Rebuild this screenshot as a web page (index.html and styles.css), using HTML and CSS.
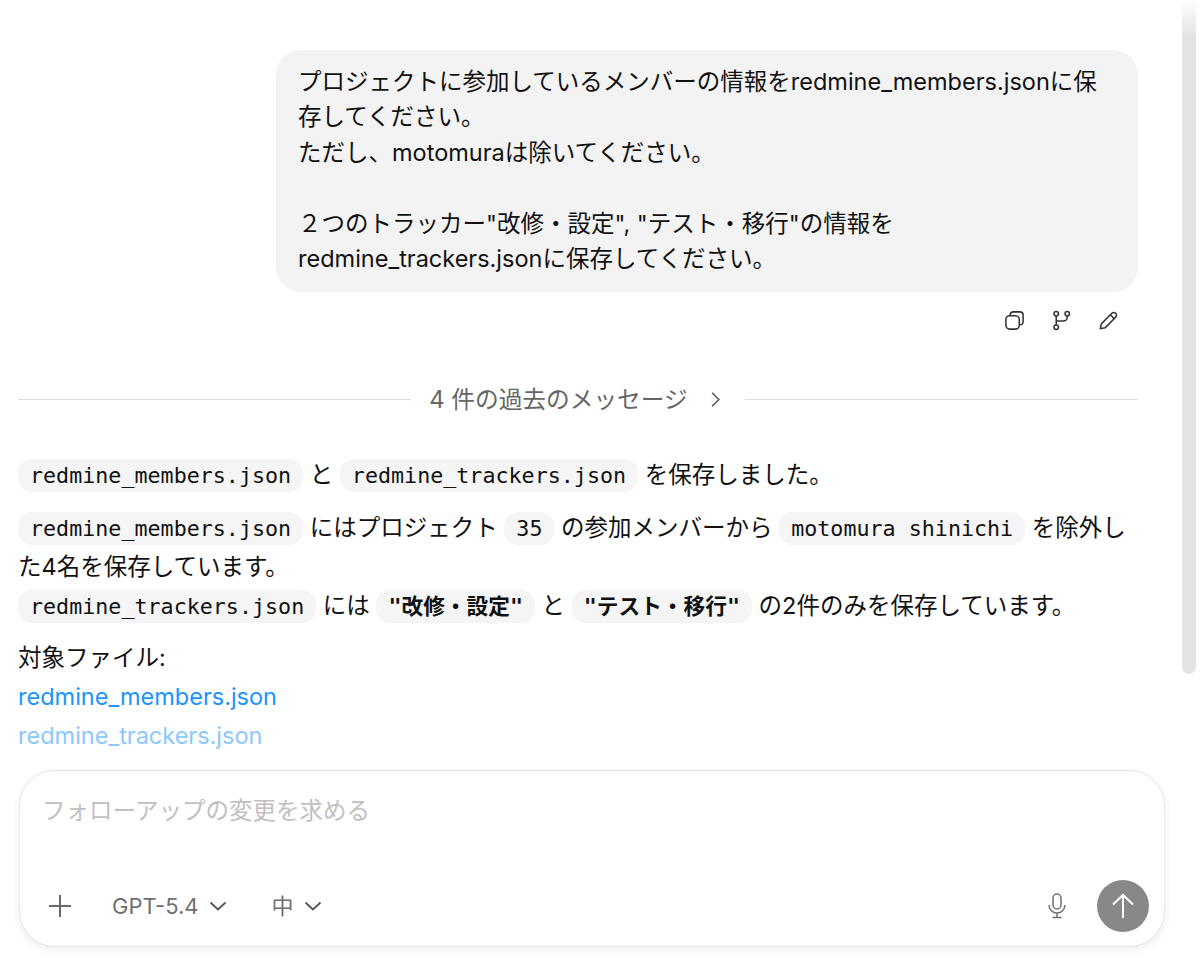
FILE: index.html
```html
<!DOCTYPE html>
<html lang="ja">
<head>
  <meta charset="UTF-8" />
  <title>Chat</title>
  <link rel="stylesheet" href="styles.css">
</head>
<body>
  <div class="scrollbar"></div>
  <main class="thread">
    <div class="bubble">プロジェクトに参加しているメンバーの情報をredmine_members.jsonに保<br>存してください。<br>ただし、motomuraは除いてください。<br><br>２つのトラッカー"改修・設定", "テスト・移行"の情報を<br>redmine_trackers.jsonに保存してください。</div>
    <div class="actions">
      <svg class="icon" viewBox="0 0 24 24"><rect x="3" y="7" width="14" height="14" rx="4"/><path d="M7.500 7V6.500A3.500 3.500 0 0 1 11 3h6.500A3.500 3.500 0 0 1 21 6.500V13a3.500 3.500 0 0 1-3.500 3.500H17"/></svg>
      <svg class="icon" viewBox="0 0 24 24"><circle cx="6.500" cy="5" r="2.300"/><circle cx="6.500" cy="19" r="2.300"/><circle cx="18" cy="5" r="2.300"/><path d="M6.500 7.300v9.400M6.500 12.500H14a4 4 0 0 0 4-4V7.300"/></svg>
      <svg class="icon" viewBox="0 0 24 24"><path d="M3.500 20.500l1-5L15.500 4.500a2.800 2.800 0 0 1 4 0 2.800 2.800 0 0 1 0 4L8.500 19.500zM14 6l4 4"/></svg>
    </div>
    <div class="divider">
      <span class="line"></span>
      <span class="divider-label">4 件の過去のメッセージ
        <svg class="chev-right" viewBox="0 0 12 20"><path d="M2 2l8 8-8 8"/></svg>
      </span>
      <span class="line"></span>
    </div>
    <p class="para first"><code>redmine_members.json</code> と <code>redmine_trackers.json</code> を保存しました。</p>
    <p class="para"><code>redmine_members.json</code> にはプロジェクト <code>35</code> の参加メンバーから <code>motomura shinichi</code> を除外し<br>た4名を保存しています。<br><code>redmine_trackers.json</code> には <code class="strong">"改修・設定"</code> と <code class="strong">"テスト・移行"</code> の2件のみを保存しています。</p>
    <p class="para files">対象ファイル:<br><a href="#">redmine_members.json</a><br><a href="#" class="faded">redmine_trackers.json</a></p>
  </main>
  <div class="composer">
    <div class="placeholder">フォローアップの変更を求める</div>
    <div class="toolbar">
      <svg class="plus" viewBox="0 0 24 24"><path d="M12 1v22M1 12h22"/></svg>
      <span class="select model">GPT-5.4 <svg class="chev" viewBox="0 0 18 10"><path d="M1.500 1.500L9 8.500l7.500-7"/></svg></span>
      <span class="select effort">中 <svg class="chev" viewBox="0 0 18 10"><path d="M1.500 1.500L9 8.500l7.500-7"/></svg></span>
      <span class="spacer"></span>
      <svg class="mic" viewBox="0 0 20 26"><rect x="6" y="1" width="8" height="15" rx="4"/><path d="M2 12a8 8 0 0 0 16 0M10 20v4M5.500 24.500h9"/></svg>
      <span class="send"><svg viewBox="0 0 24 26"><path d="M12 25V2M2 11.500L12 2l10 9.500"/></svg></span>
    </div>
  </div>
</body>
</html>
```
FILE: styles.css
```css
* {
  box-sizing: border-box;
}
html, body {
  height: 100%;
}
body {
  margin: 0;
  height: 968px;
  overflow: hidden;
  background: #fff;
  color: #111;
  font-family: Inter, "Noto Sans CJK JP", sans-serif;
  font-size: 23.500px;
  line-height: 39px;
  position: relative;
}
.scrollbar {
  position: absolute;
  top: 0;
  left: 1182px;
  width: 14px;
  height: 674px;
  border-radius: 0 0 7px 7px;
  background: linear-gradient(#fff, #e3e3e3 36px);
}
.thread {
  width: 1120px;
  margin-left: 18px;
  padding-top: 50px;
}
.bubble {
  margin-left: 258px;
  background: #f3f3f3;
  border-radius: 25px;
  padding: 14px 22px;
  height: 242px;
  line-height: 35.400px;
}
.actions {
  display: flex;
  justify-content: flex-end;
  gap: 24px;
  padding: 17px 18px 0 0;
}
.icon {
  width: 23px;
  height: 23px;
  fill: none;
  stroke: #333;
  stroke-width: 1.600;
}
.divider {
  display: flex;
  align-items: center;
  gap: 18px;
  margin-top: 52px;
  height: 30px;
  color: #666;
}
.line {
  flex: 1;
  height: 1px;
  background: #dcdcdc;
}
.divider-label {
  display: flex;
  align-items: center;
  gap: 22px;
  padding-right: 6px;
  font-size: 23.700px;
}
.chev-right {
  width: 11px;
  height: 17px;
  fill: none;
  stroke: #555;
  stroke-width: 1.800;
}
.para {
  margin: 0 0 13px;
}
.para.first {
  margin: 41px 0 14px;
}
code {
  font-family: "DejaVu Sans Mono", "Noto Sans CJK JP", monospace;
  font-size: 21.700px;
  line-height: 1;
  background: #f5f5f5;
  border-radius: 14px;
  padding: 4px 12px;
}
code.strong {
  font-weight: 700;
}
a {
  color: #1a94ff;
  text-decoration: none;
}
a.faded {
  color: #8cc8ff;
}
.composer {
  position: absolute;
  left: 19px;
  top: 770px;
  width: 1146px;
  height: 177px;
  border: 1px solid #e6e6e6;
  border-radius: 36px;
  background: #fff;
  box-shadow: 0 3px 8px rgba(0,0,0,0.07);
  padding: 21px 15px 14px 22px;
  display: flex;
  flex-direction: column;
  justify-content: space-between;
}
.placeholder {
  color: #c0c0c0;
  line-height: 38px;
}
.toolbar {
  display: flex;
  align-items: center;
  color: #6f6f6f;
  height: 52px;
}
.plus {
  width: 24px;
  height: 24px;
  margin-left: 6px;
  fill: none;
  stroke: #6a6a6a;
  stroke-width: 2;
}
.select {
  display: flex;
  align-items: center;
  gap: 10px;
  font-size: 22px;
}
.model {
  margin-left: 40px;
}
.effort {
  margin-left: 45px;
}
.chev {
  width: 18px;
  height: 10px;
  fill: none;
  stroke: #555;
  stroke-width: 1.800;
}
.spacer {
  flex: 1;
}
.mic {
  width: 20px;
  height: 26px;
  margin-right: 30px;
  fill: none;
  stroke: #6f6f6f;
  stroke-width: 1.500;
}
.send {
  width: 52px;
  height: 52px;
  border-radius: 50%;
  background: #888;
  display: flex;
  align-items: center;
  justify-content: center;
}
.send svg {
  width: 24px;
  height: 26px;
  fill: none;
  stroke: #fff;
  stroke-width: 2;
}
```
